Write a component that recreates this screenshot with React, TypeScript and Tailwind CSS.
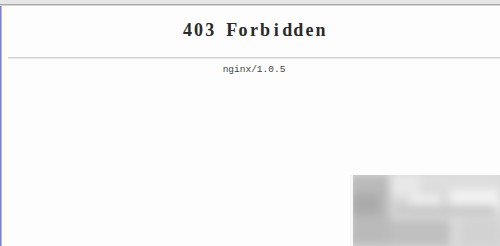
const title = '403 Forbidden';

export default function App() {
  return (
    <div className="relative w-[500px] h-[246px] overflow-hidden bg-[#fdfdfd]">
      {/* browser chrome strip */}
      <div className="h-[4px] bg-[#e6e6e6]" />
      <div className="h-[1px] bg-[#a9a9a9]" />
      <div className="h-[1px] bg-[#d4d4d4]" />
      <div className="flex h-[240px]">
        <div className="w-[1px] bg-[#7f7fd6]" />
        <div className="w-[1px] bg-[#b8b8ee]" />
        <div className="w-[4px] bg-[#fdfde8]" />
        <div className="flex-1 pl-[2px] pt-[12px]">
          <h1
            className="flex justify-center text-[18px] leading-[24px] font-bold text-[#2a2a2a]"
            style={{ fontFamily: '"Liberation Serif", "Times New Roman", serif' }}
          >
            {title.split('').map((ch, i) => (
              <span key={i} className="inline-block w-[11.1px] text-center">
                {ch === ' ' ? '\u00a0' : ch}
              </span>
            ))}
          </h1>
          <div className="mt-[15px] h-[2px] bg-[#cfcfcf] border-b border-[#e8e8e8]" />
          <p
            className="mt-[5px] text-center text-[9.5px] leading-[12px] text-[#444]"
            style={{ fontFamily: '"Liberation Mono", "Courier New", monospace' }}
          >
            nginx/1.0.5
          </p>
        </div>
      </div>
      {/* blurred watermark in bottom-right corner */}
      <svg className="absolute left-[350px] top-[175px]" width="150" height="71" viewBox="0 0 150 71">
        <defs>
          <filter id="b" x="-10%" y="-10%" width="120%" height="120%">
            <feGaussianBlur stdDeviation="4" />
          </filter>
        </defs>
        <rect x="0" y="0" width="150" height="71" fill="#dadada" />
        <g filter="url(#b)">
          <rect x="0" y="0" width="40" height="71" fill="#bababa" />
          <rect x="40" y="0" width="30" height="20" fill="#e8e8e8" />
          <rect x="70" y="0" width="80" height="15" fill="#dedede" />
          <rect x="100" y="15" width="50" height="20" fill="#f2f2f2" />
          <rect x="0" y="18" width="30" height="22" fill="#aaaaaa" />
          <rect x="45" y="30" width="100" height="10" fill="#c8c8c8" />
          <rect x="40" y="45" width="60" height="26" fill="#c0c0c0" />
          <rect x="110" y="45" width="40" height="26" fill="#d2d2d2" />
          <rect x="60" y="20" width="30" height="10" fill="#eeeeee" />
        </g>
        <rect x="0" y="0" width="3" height="71" fill="#f6f6f6" />
      </svg>
    </div>
  );
}
